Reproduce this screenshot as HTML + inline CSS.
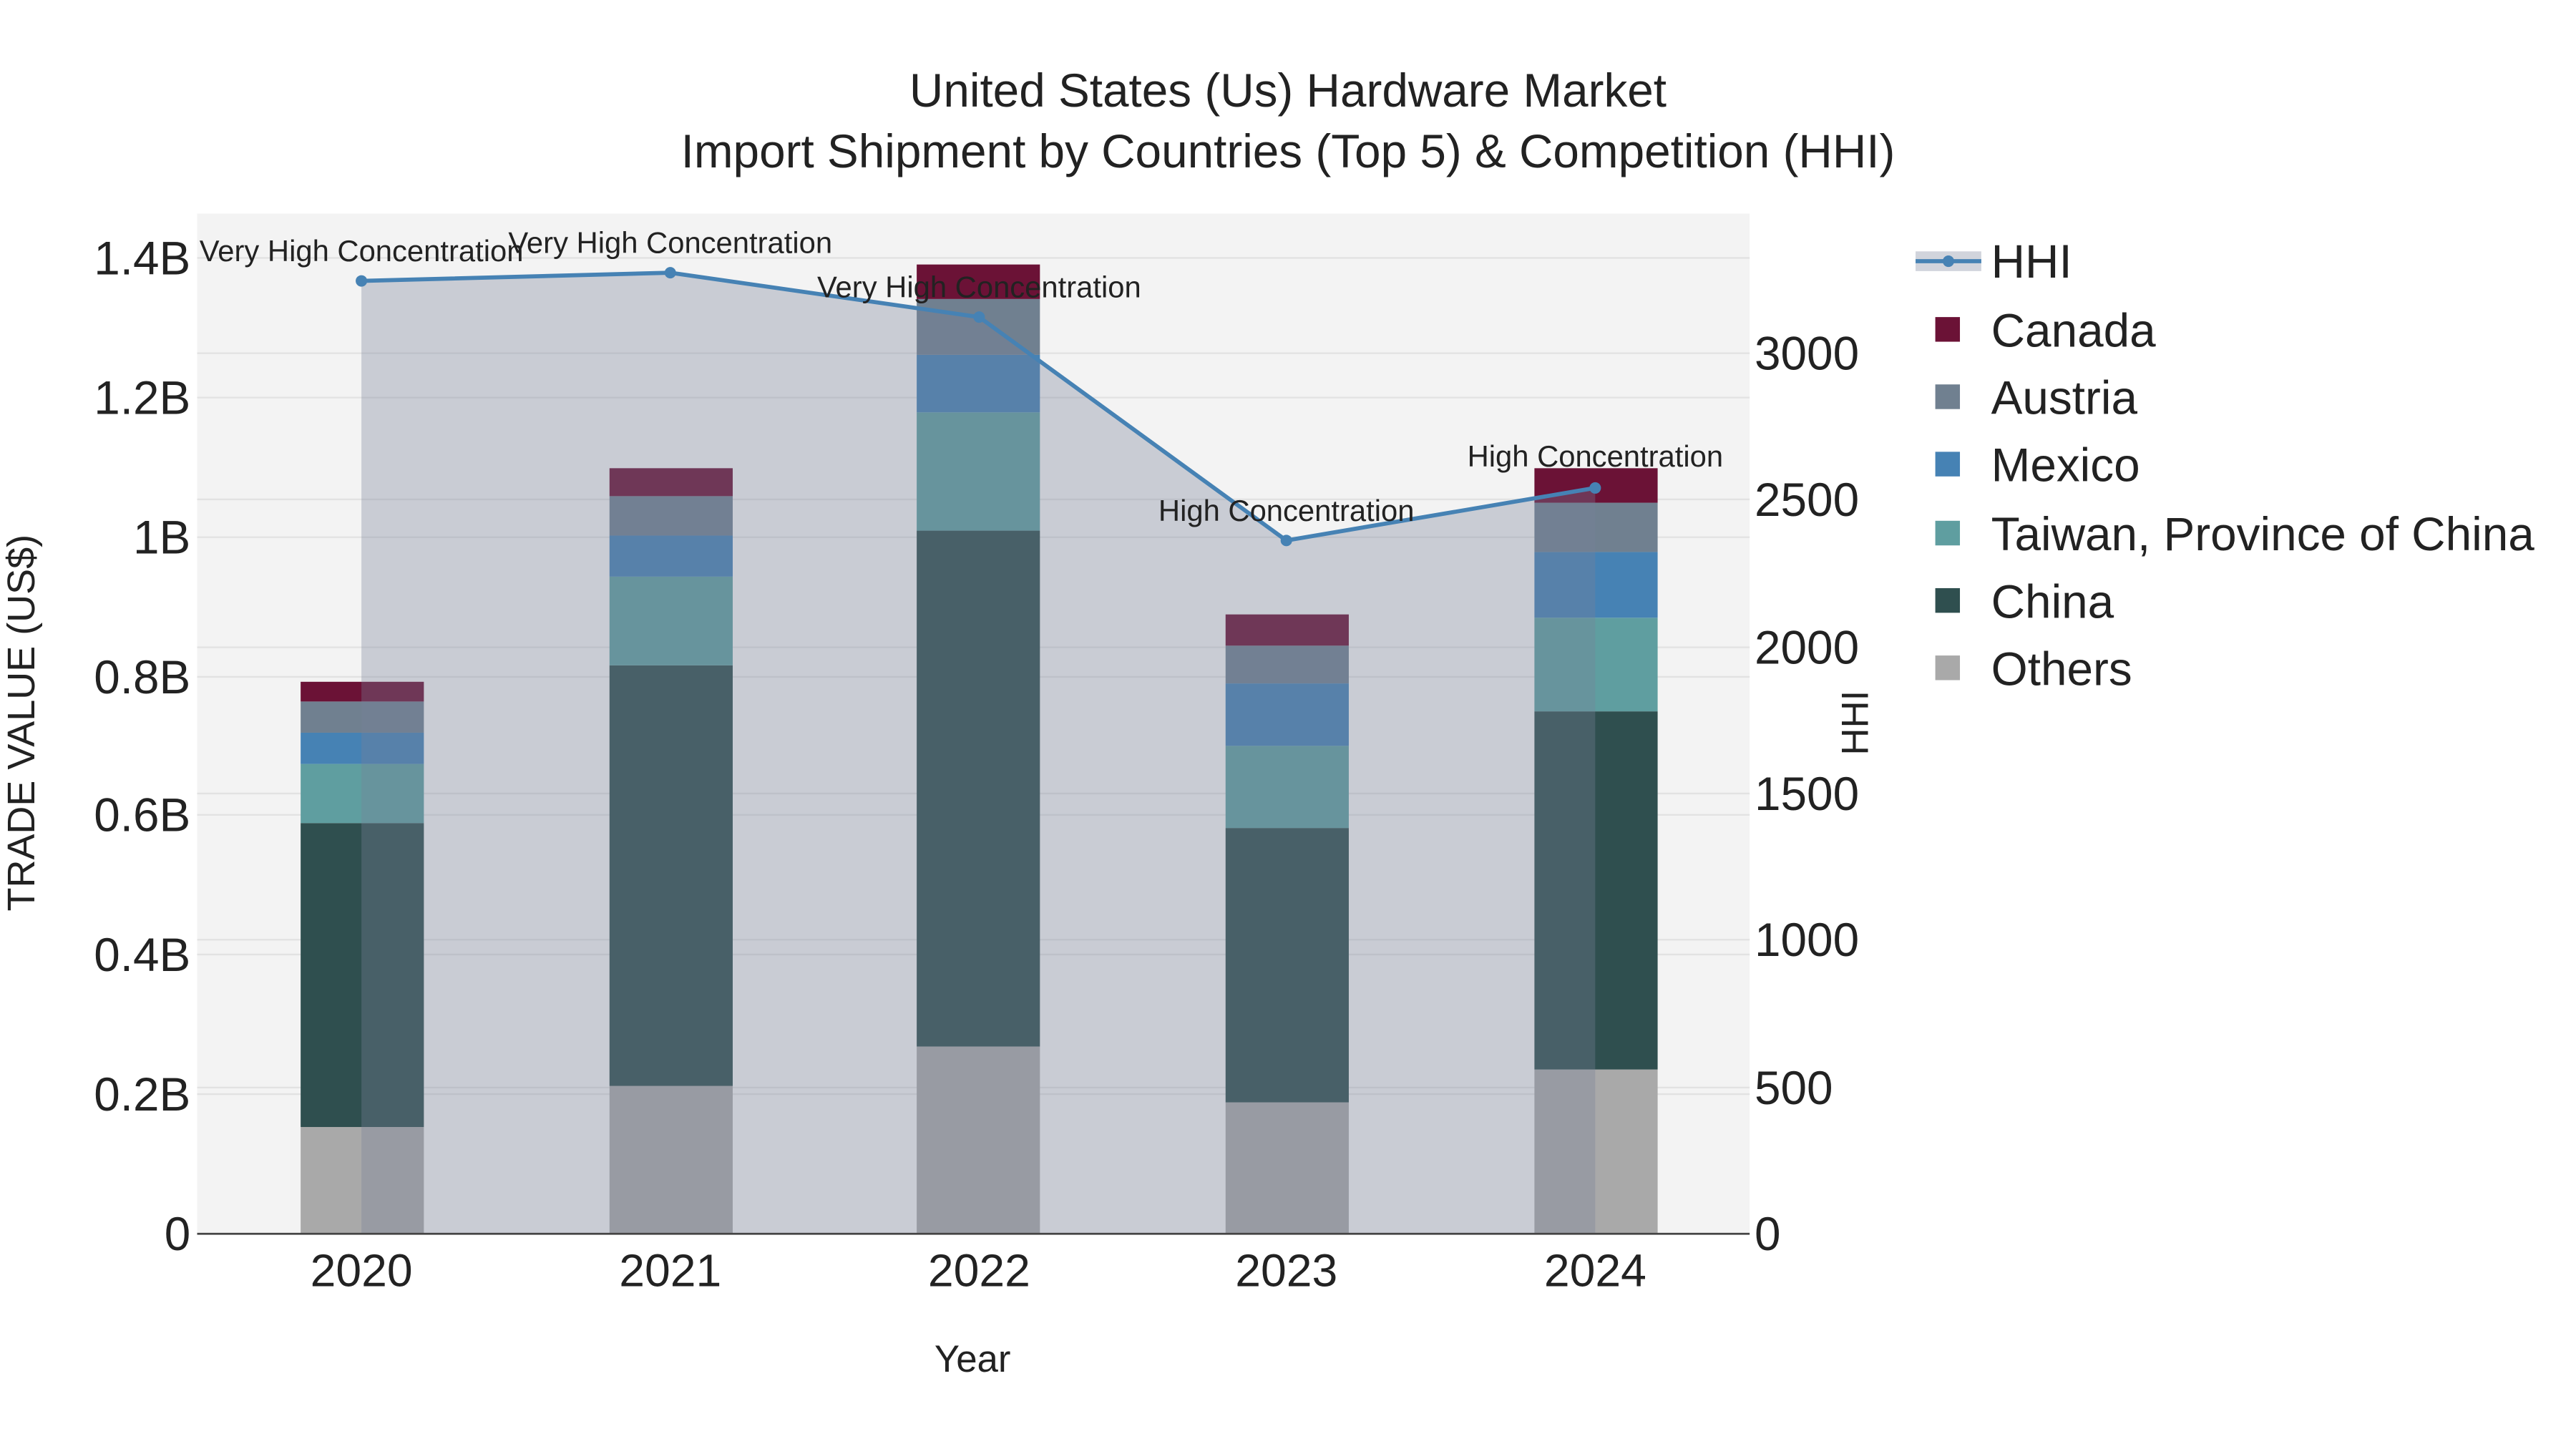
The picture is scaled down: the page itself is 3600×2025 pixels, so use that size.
<!DOCTYPE html>
<html><head><meta charset="utf-8"><style>html,body{margin:0;padding:0;background:#fff}svg{display:block}text{font-family:"Liberation Sans",sans-serif;fill:#222}</style></head><body>
<svg width="3600" height="2025" viewBox="0 0 1568 882" xmlns="http://www.w3.org/2000/svg">
<rect x="0" y="0" width="1568" height="882" fill="#fff"/>
<rect x="120" y="130" width="945" height="621" fill="#f3f3f3"/>
<g stroke="#e2e2e2" stroke-width="1">
<line x1="120" x2="1065" y1="666" y2="666"/><line x1="120" x2="1065" y1="581" y2="581"/><line x1="120" x2="1065" y1="496" y2="496"/><line x1="120" x2="1065" y1="412" y2="412"/><line x1="120" x2="1065" y1="327" y2="327"/><line x1="120" x2="1065" y1="242" y2="242"/><line x1="120" x2="1065" y1="157" y2="157"/>
<line x1="120" x2="1065" y1="662" y2="662"/><line x1="120" x2="1065" y1="572" y2="572"/><line x1="120" x2="1065" y1="483" y2="483"/><line x1="120" x2="1065" y1="394" y2="394"/><line x1="120" x2="1065" y1="304" y2="304"/><line x1="120" x2="1065" y1="215" y2="215"/>
</g>
<g>
<rect x="183" y="686" width="75" height="65" fill="#a9a9a9"/><rect x="183" y="501" width="75" height="185" fill="#2f4f4f"/><rect x="183" y="465" width="75" height="36" fill="#5f9ea0"/><rect x="183" y="446" width="75" height="19" fill="#4682b4"/><rect x="183" y="427" width="75" height="19" fill="#708090"/><rect x="183" y="415" width="75" height="12" fill="#6b1236"/>
<rect x="371" y="661" width="75" height="90" fill="#a9a9a9"/><rect x="371" y="405" width="75" height="256" fill="#2f4f4f"/><rect x="371" y="351" width="75" height="54" fill="#5f9ea0"/><rect x="371" y="326" width="75" height="25" fill="#4682b4"/><rect x="371" y="302" width="75" height="24" fill="#708090"/><rect x="371" y="285" width="75" height="17" fill="#6b1236"/>
<rect x="558" y="637" width="75" height="114" fill="#a9a9a9"/><rect x="558" y="323" width="75" height="314" fill="#2f4f4f"/><rect x="558" y="251" width="75" height="72" fill="#5f9ea0"/><rect x="558" y="216" width="75" height="35" fill="#4682b4"/><rect x="558" y="182" width="75" height="34" fill="#708090"/><rect x="558" y="161" width="75" height="21" fill="#6b1236"/>
<rect x="746" y="671" width="75" height="80" fill="#a9a9a9"/><rect x="746" y="504" width="75" height="167" fill="#2f4f4f"/><rect x="746" y="454" width="75" height="50" fill="#5f9ea0"/><rect x="746" y="416" width="75" height="38" fill="#4682b4"/><rect x="746" y="393" width="75" height="23" fill="#708090"/><rect x="746" y="374" width="75" height="19" fill="#6b1236"/>
<rect x="934" y="651" width="75" height="100" fill="#a9a9a9"/><rect x="934" y="433" width="75" height="218" fill="#2f4f4f"/><rect x="934" y="376" width="75" height="57" fill="#5f9ea0"/><rect x="934" y="336" width="75" height="40" fill="#4682b4"/><rect x="934" y="306" width="75" height="30" fill="#708090"/><rect x="934" y="285" width="75" height="21" fill="#6b1236"/>
</g>
<polygon points="220,751 220,171 408,166 596,193 783,329 971,297 971,751" fill="rgb(119,130,151)" fill-opacity="0.34"/>
<polyline points="220,171 408,166 596,193 783,329 971,297" fill="none" stroke="#4682b4" stroke-width="2.5"/>
<g fill="#4682b4"><circle cx="220" cy="171" r="3.5"/><circle cx="408" cy="166" r="3.5"/><circle cx="596" cy="193" r="3.5"/><circle cx="783" cy="329" r="3.5"/><circle cx="971" cy="297" r="3.5"/></g>
<line x1="120" x2="1065" y1="751" y2="751" stroke="#444" stroke-width="1.2"/>
<g font-size="18.2" text-anchor="middle">
<text x="220" y="159">Very High Concentration</text><text x="408" y="154">Very High Concentration</text><text x="596" y="181">Very High Concentration</text><text x="783" y="317">High Concentration</text><text x="971" y="284">High Concentration</text>
</g>
<g font-size="28.6" text-anchor="end">
<text x="116" y="761">0</text><text x="116" y="676">0.2B</text><text x="116" y="591">0.4B</text><text x="116" y="506">0.6B</text><text x="116" y="422">0.8B</text><text x="116" y="337">1B</text><text x="116" y="252">1.2B</text><text x="116" y="167">1.4B</text>
</g>
<g font-size="28.6">
<text x="1068" y="761">0</text><text x="1068" y="672">500</text><text x="1068" y="582">1000</text><text x="1068" y="493">1500</text><text x="1068" y="404">2000</text><text x="1068" y="314">2500</text><text x="1068" y="225">3000</text>
</g>
<g font-size="28" text-anchor="middle">
<text x="220" y="783">2020</text><text x="408" y="783">2021</text><text x="596" y="783">2022</text><text x="783" y="783">2023</text><text x="971" y="783">2024</text>
</g>
<g font-size="28.6" text-anchor="middle">
<text x="784" y="65">United States (Us) Hardware Market</text>
<text x="784" y="102">Import Shipment by Countries (Top 5) &amp; Competition (HHI)</text>
</g>
<text x="592" y="835" font-size="23" text-anchor="middle">Year</text>
<text transform="translate(21,440) rotate(-90)" font-size="23.5" text-anchor="middle">TRADE VALUE (US$)</text>
<text transform="translate(1137,440) rotate(-90)" font-size="23" text-anchor="middle">HHI</text>
<rect x="1166" y="153" width="40" height="12" fill="rgb(119,130,151)" fill-opacity="0.34"/>
<line x1="1166" x2="1206" y1="159" y2="159" stroke="#4682b4" stroke-width="2.5"/><circle cx="1186" cy="159" r="3.5" fill="#4682b4"/>
<rect x="1178" y="193" width="15" height="15" fill="#6b1236"/>
<rect x="1178" y="234" width="15" height="15" fill="#708090"/>
<rect x="1178" y="275" width="15" height="15" fill="#4682b4"/>
<rect x="1178" y="317" width="15" height="15" fill="#5f9ea0"/>
<rect x="1178" y="358" width="15" height="15" fill="#2f4f4f"/>
<rect x="1178" y="399" width="15" height="15" fill="#a9a9a9"/>
<g font-size="28.6">
<text x="1212" y="169">HHI</text><text x="1212" y="211">Canada</text><text x="1212" y="252">Austria</text><text x="1212" y="293">Mexico</text><text x="1212" y="335">Taiwan, Province of China</text><text x="1212" y="376">China</text><text x="1212" y="417">Others</text>
</g>
</svg>
</body></html>
